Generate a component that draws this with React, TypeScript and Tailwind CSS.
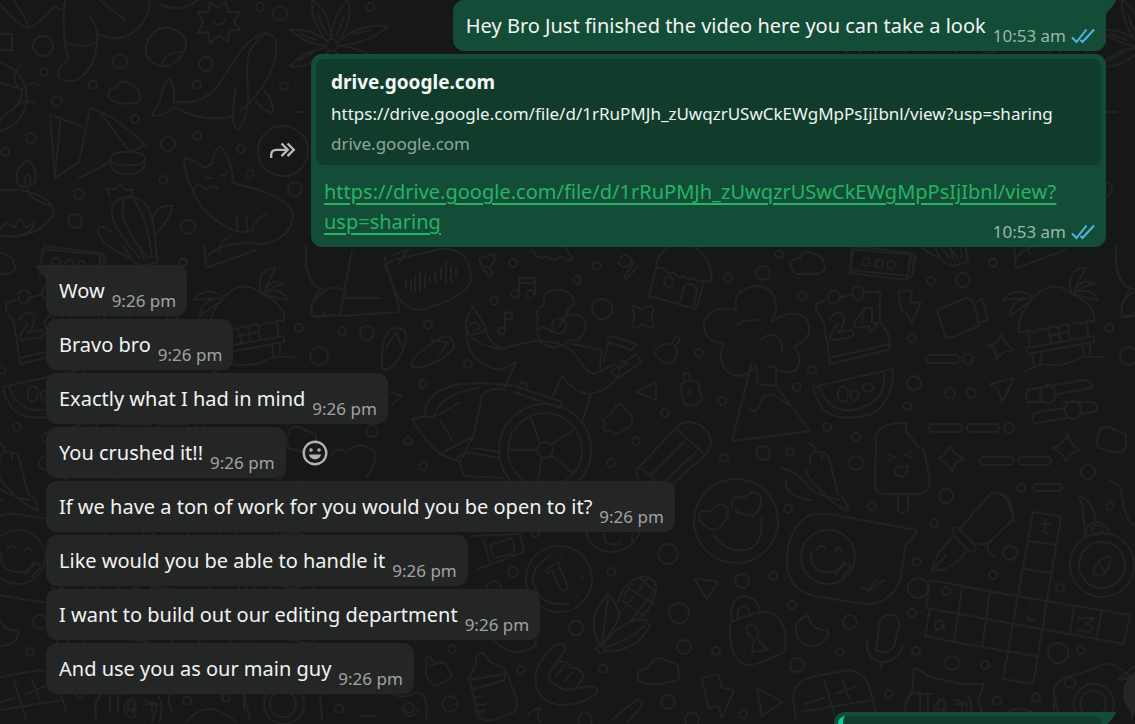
import type { ReactNode } from "react"

interface IncomingMessage {
  id: number
  text: string
  time: string
  reactable?: boolean
}

const FILE_URL = "https://drive.google.com/file/d/1rRuPMJh_zUwqzrUSwCkEWgMpPsIjIbnl/view?usp=sharing"

const incoming: IncomingMessage[] = [
  { id: 1, text: "Wow", time: "9:26 pm" },
  { id: 2, text: "Bravo bro", time: "9:26 pm" },
  { id: 3, text: "Exactly what I had in mind", time: "9:26 pm" },
  { id: 4, text: "You crushed it!!", time: "9:26 pm", reactable: true },
  { id: 5, text: "If we have a ton of work for you would you be open to it?", time: "9:26 pm" },
  { id: 6, text: "Like would you be able to handle it", time: "9:26 pm" },
  { id: 7, text: "I want to build out our editing department", time: "9:26 pm" },
  { id: 8, text: "And use you as our main guy", time: "9:26 pm" },
]

// cx, cy, r of the small rings scattered between the doodles
const rings = [
  [43, 46, 10], [120, 61, 7], [44, 72, 4], [93, 85, 4], [57, 101, 5], [31, 138, 5], [5, 152, 4],
  [206, 64, 7], [197, 85, 4], [284, 86, 4], [260, 7, 4], [280, 13, 7], [168, 144, 7], [197, 136, 4],
  [135, 119, 4], [163, 180, 4], [241, 149, 4], [250, 174, 4], [295, 189, 7], [79, 194, 5], [75, 221, 7],
  [188, 227, 7], [183, 262, 4], [299, 328, 4], [342, 331, 4], [367, 333, 7], [319, 356, 9], [370, 7, 4],
  [513, 263, 4], [577, 280, 4], [597, 266, 4], [494, 301, 4], [428, 325, 4], [468, 364, 4], [423, 384, 4],
  [602, 309, 10], [699, 353, 4], [728, 278, 4], [722, 401, 4], [665, 413, 4], [636, 441, 4], [611, 463, 4],
  [724, 458, 4], [408, 441, 4], [423, 466, 4], [779, 254, 4], [763, 273, 7], [802, 296, 4], [812, 370, 4],
  [797, 387, 4], [827, 427, 4], [856, 437, 4], [763, 453, 7], [790, 452, 4], [856, 463, 7], [912, 338, 4],
  [914, 383, 7], [907, 406, 4], [931, 281, 4], [963, 280, 7], [993, 263, 4], [950, 393, 5], [971, 393, 5],
  [968, 359, 5], [1009, 428, 5], [1088, 472, 7], [788, 509, 4], [872, 506, 4], [946, 496, 7], [934, 523, 4],
  [1021, 488, 4], [917, 562, 4], [918, 588, 10], [946, 591, 4], [1010, 553, 7], [993, 575, 4], [1060, 588, 4],
  [773, 576, 4], [792, 605, 4], [850, 622, 7], [912, 613, 4], [797, 665, 7], [840, 652, 4], [916, 651, 4],
  [952, 663, 7], [985, 665, 4], [1058, 653, 10], [1081, 650, 4], [889, 694, 4], [997, 701, 4], [1036, 697, 4],
  [1070, 683, 5], [1110, 506, 4], [668, 554, 10], [611, 572, 4], [742, 581, 7], [679, 613, 10], [684, 647, 7],
  [716, 651, 4], [603, 669, 4], [576, 628, 7], [513, 572, 5], [452, 649, 4], [521, 670, 4], [450, 704, 8],
  [409, 708, 5], [668, 702, 7], [743, 714, 4], [535, 533, 4], [494, 588, 7], [187, 701, 4], [226, 698, 4],
  [339, 709, 4], [372, 431, 6], [585, 720, 7], [692, 720, 7],
]

const doodles = [
  // globe and blanket, top left
  "M0 63A35 35 0 0 1 0 131M20 65Q8 80 22 90Q30 80 38 85M0 83L18 88Q28 92 14 108Q-2 120 0 122M14 108Q24 98 36 103M0 34H12M12 34V50H0",
  // sock
  "M65 0Q61 30 68 59Q56 70 58 76Q64 84 78 80Q98 66 97 34Q96 24 90 16M65 42Q82 50 97 42M97 34Q130 48 148 14L150 0M100 0L125 20M0 4Q20 28 30 28Q46 18 54 6L62 10M14 0Q24 16 30 28M160 4Q180 14 198 0",
  // folded note and burst
  "M146 46Q150 30 166 27Q182 30 186 42Q186 56 170 66Q152 68 146 54ZM162 66Q162 52 185 52",
  "M198 12L208 12L210 2L218 8L226 2L228 12L240 12L234 21L240 30L229 30L228 42L219 35L210 43L208 32L198 33L203 22ZM212 22Q220 28 226 20",
  // whale
  "M174 102Q176 86 169 78Q161 90 160 102Q152 112 153 116Q164 116 174 107Q206 124 234 116M177 102Q208 106 226 74Q246 38 264 33Q278 32 276 52Q272 84 240 111M236 88Q229 128 238 130Q246 122 248 100L247 66Q248 44 266 34M264 90Q276 106 272 113Q262 110 256 101M258 62H258",
  // cloud
  "M109 98Q106 88 116 88Q120 78 130 84Q138 86 138 92Q144 100 136 103Q118 106 109 98Z",
  // open book with a bun
  "M50 115L55 178L79 162L90 108Q114 114 145 145L130 152L100 112M52 115L83 127M79 178L110 162M60 122L55 178M110 160Q110 151 128 152Q146 152 145 160Q142 166 128 165Q112 166 110 160ZM111 164Q112 174 128 174Q144 174 145 162",
  // candle bowl
  "M18 184Q12 170 28 160Q40 172 34 184Q24 190 18 184ZM26 184Q22 178 28 174Q32 180 30 186M0 190H20Q52 196 54 212Q40 240 0 236M28 190Q30 200 52 206M0 230L6 222L14 228L20 218L26 228L34 222Q34 232 22 234",
  // cactus
  "M110 197L107 188L115 190L120 183L125 190L133 190L130 198M140 258Q108 224 112 206Q122 192 142 200Q156 212 156 258M124 200Q116 220 148 258M134 200Q148 220 152 258M112 232Q98 222 98 232Q100 244 130 258M152 220Q156 204 172 206Q172 216 156 234",
  // cat
  "M193 190Q184 174 184 158Q196 160 204 168L212 164Q214 150 220 146Q230 158 233 176Q230 184 238 184M193 190Q200 180 206 190Q214 182 218 190M193 190Q200 212 222 224Q240 236 250 230M236 184Q292 196 293 216Q290 240 262 244Q220 240 206 258M252 232Q254 220 266 214M236 216L238 230M246 218L248 232M206 178H212M220 174Q224 178 228 172M230 236Q216 244 220 254",
  // flower
  "M327 42Q310 20 312 0Q330 12 331 38Q334 12 348 0Q354 20 338 42Q356 24 388 26Q372 42 340 46Q362 48 376 60Q352 66 336 52M326 46Q306 44 290 30Q310 28 326 40M324 48Q302 52 290 66Q308 70 328 52M318 14Q322 28 328 36M344 16Q340 28 336 36M354 34L370 30M300 34L316 40M300 60L314 52",
  "M326 45A6 6 0 1 0 338 45A6 6 0 1 0 326 45",
  // ticket
  "M44 246L100 253L98 276L40 270ZM100 253L104 256L102 276M852 249L913 255M850 275L852 249M850 273L906 280L912 254M906 280L912 276L916 256M862 262A4 4 0 1 0 870 262A4 4 0 1 0 862 262M875 264A4 4 0 1 0 883 264A4 4 0 1 0 875 264M887 265A4 4 0 1 0 895 265A4 4 0 1 0 887 265",
  // voice note bubble
  "M384 265L394 260L440 249Q470 246 471 280Q466 298 420 310Q398 310 390 276ZM406 282V288M411 280V290M415 276V292M420 272V292M425 275V288M430 276V282M435 272V282M441 268V280M446 262V284M451 266V282M456 268V276M393 255L408 250L398 264",
  // helmeted skater
  "M305 262Q308 286 326 290Q336 284 346 292M352 250L340 315H328M384 255L400 312L340 316M324 292Q308 300 312 316H330M342 298H380",
  // notes, flags and small shapes
  "M480 262Q478 256 486 257Q494 250 495 260Q490 270 485 266M480 262L488 276Q494 276 490 268M620 258Q628 250 632 262Q622 272 619 262M634 262L624 278M638 266L626 280M519 295V278H535V294M519 283H535M511 294A4 4 0 1 0 519 294A4 4 0 1 0 511 294M526 294A4 4 0 1 0 534 294A4 4 0 1 0 526 294M505 330V312L512 313V319H506M498 331A3 3 0 1 0 505 331A3 3 0 1 0 498 331",
  "M632 307Q634 304 642 310Q652 302 654 310Q650 316 654 326Q650 330 642 324Q634 332 632 324Q636 316 632 307ZM532 250Q540 262 546 256Q556 264 560 256Q572 264 572 258L566 248",
  // toast and sandals
  "M382 368Q380 330 396 328Q408 328 406 340Q400 364 386 370ZM386 348L396 332L402 346M412 366Q408 358 440 338Q454 334 454 348Q442 362 420 368ZM430 340L448 342L440 354",
  // seated figure with flowers
  "M466 325Q468 344 500 349Q520 344 534 341Q566 340 578 358Q586 372 594 374L615 364Q624 370 614 382Q600 394 588 394Q574 392 562 376L553 396M466 325Q464 364 500 370L516 362L504 388M486 330Q490 346 506 349M466 322L472 306Q478 314 486 328Q480 336 466 334ZM470 326Q474 318 480 326Q480 330 474 330M572 344L602 350L600 368",
  "M538 318Q534 306 544 306Q542 290 556 290Q574 290 574 304Q566 310 566 316Q584 310 586 328Q582 342 570 340Q558 350 548 346Q534 344 538 318ZM566 314L560 326M552 326A7 8 0 1 0 566 326A7 8 0 1 0 552 326M538 330Q544 324 552 332M606 340L612 336L636 344L632 350L608 342L604 362M610 372L636 354L642 362L618 378ZM620 360L628 364L620 368",
  // market stall
  "M656 264Q664 244 680 242Q708 246 712 278Q710 284 704 280Q698 284 694 278Q688 282 684 276Q678 280 674 272Q668 276 664 268Q658 270 656 264M656 268L649 296L696 309L704 282M680 302L684 286Q692 280 697 290L694 306M664 282A5 5 0 1 0 674 282A5 5 0 1 0 664 282",
  // broccoli tree
  "M724 343Q702 342 704 322Q712 304 736 310Q732 288 758 286Q778 288 776 312Q770 322 772 322Q790 308 806 318Q816 338 794 346Q804 360 796 370Q784 376 774 366L768 368M738 325Q740 320 758 320M724 343Q716 360 728 372Q742 382 756 366M761 340Q774 328 782 344V350M756 366L758 384L776 386V370M752 362L732 441L810 431L776 386M748 408Q754 414 758 408L764 396L772 394L788 404",
  // bag tags and cursor
  "M656 350Q664 342 672 344Q674 336 678 336Q682 342 674 346L678 352Q674 364 666 364L655 356ZM680 386Q686 378 698 382L702 400Q694 408 684 404ZM684 380Q682 370 688 374L692 380M690 390L690 394M636 392L656 382V400Q646 396 636 392M390 392L402 396L392 404M602 420Q612 416 616 406L622 404L626 410Q636 416 630 426Q620 434 616 434L610 430Q602 434 604 426Q608 424 602 420",
  // pedal boat
  "M424 416Q426 390 460 384Q490 382 514 386L562 402L560 408L514 392M433 418Q440 394 478 388M412 419L427 416L433 418L460 402M412 419Q424 440 440 454L460 462L474 434L482 396Q490 386 506 390M440 420L452 440M440 454L470 438M472 448L500 452M456 460Q462 450 476 454L500 458M460 462L464 476L504 478M518 386Q524 378 528 388M590 396L582 424",
  "M499 450A46 46 0 1 0 591 450A46 46 0 1 0 499 450M508 450A37 37 0 1 0 582 450A37 37 0 1 0 508 450M537 450A8 8 0 1 0 553 450A8 8 0 1 0 537 450M540 444L531 418M552 444L576 428M552 456L572 472M542 458L537 484M537 450H508",
  // eraser pencil
  "M636 470L680 424Q694 418 706 430Q716 442 706 454L664 492Q650 492 640 486ZM676 428L706 456M684 442L650 476M696 452L662 484M640 468L652 476L660 488",
  // calendar
  "M825 300L816 304Q814 310 824 322L830 364L888 350Q894 338 880 322V292L866 292M838 298L850 295M828 297A6 7 0 1 0 840 297A6 7 0 1 0 828 297M852 293A6 7 0 1 0 864 293A6 7 0 1 0 852 293M829 358L890 344M829 320Q836 308 844 316Q846 324 838 332L852 330Q856 336 848 338L832 340Q826 338 838 324M866 308L872 308V322L878 324L874 330L870 332V326L856 328L854 322ZM864 316L862 322",
  // bolt, camera, sparkle
  "M898 292L912 290L910 302L921 303L912 322L906 312L902 312ZM937 310L966 298Q972 298 974 304L979 326L950 338Q944 338 944 332ZM977 302L982 298L988 320L984 322M988 320L980 322M990 345Q998 344 1002 334Q1004 344 1014 350Q1002 350 996 360Q998 350 988 345Z",
  // beach hut
  "M1018 330Q1020 308 1040 292Q1056 280 1072 294Q1096 304 1094 322L1088 320L1082 324L1076 322L1070 326L1064 324L1058 328L1052 326L1046 330L1040 328L1034 332L1028 330Q1018 334 1018 330M1032 296Q1014 286 1003 300Q1016 298 1030 298M1030 298Q1010 300 1010 316Q1020 308 1030 302M1071 292Q1066 268 1086 268Q1080 276 1074 292Q1082 276 1095 284Q1086 284 1074 293Q1090 286 1098 300Q1086 298 1074 294M1028 332L1030 346M1087 322L1088 336M1048 328L1052 344M1058 326L1060 342M1068 324L1070 340M1048 336L1068 332M1026 348L1094 336V342L1028 354ZM1032 354L1034 364M1042 352L1040 364M1082 346L1084 356M1090 344L1090 354M1024 372L1040 364Q1064 368 1080 358Q1088 356 1104 357",
  // ice-cream sticks, watermelon
  "M813 387L893 369Q894 400 872 414Q836 424 822 408Q814 396 813 387ZM819 386Q828 412 852 410Q888 404 884 372M838 396A4 6 0 1 0 848 392A4 6 0 1 0 838 396M851 392Q850 402 856 400Q862 394 856 390ZM862 386Q870 380 874 388Q870 394 864 390Z",
  "M930 355H956A4 4 0 0 1 956 363H930A4 4 0 0 1 930 355M933 424H958A4 4 0 0 1 958 432H933A4 4 0 0 1 933 424M971 424H995A4 4 0 0 1 995 432H971A4 4 0 0 1 971 424M984 457H1010A4 4 0 0 1 1010 465H984A4 4 0 0 1 984 457M1022 457H1047A4 4 0 0 1 1047 465H1022A4 4 0 0 1 1022 457M1035 484H1060A4 4 0 0 1 1060 491H1035A4 4 0 0 1 1035 484",
  "M990 384L1014 378L1002 402L998 390ZM938 458Q946 456 950 446Q954 454 964 459Q954 462 952 472Q948 462 938 458ZM1053 448Q1062 446 1068 434Q1070 446 1080 450Q1070 452 1066 461Q1062 452 1053 448Z",
  "M1027 390L1084 380Q1092 380 1092 388L1058 394M1042 402L1028 402Q1024 396 1028 390L1040 388M1040 394A8 9 0 1 0 1056 394A8 9 0 1 0 1040 394M1064 402L1090 402Q1100 402 1096 411L1082 414M1064 408L1034 413Q1030 422 1036 423L1066 418M1065 410A8 9 0 1 0 1081 410A8 9 0 1 0 1065 410M1097 440L1100 430Q1106 424 1114 430L1126 434V446Q1124 454 1114 452L1098 448Z",
  // popsicle
  "M875 486L876 436Q880 422 908 423Q902 430 912 438Q916 448 924 450L930 480Q930 492 920 494L884 494Q874 492 875 486M889 454L895 457L889 460M911 452L905 455L911 458M894 468L908 466Q906 480 900 476Q894 476 894 468M898 496V510Q902 516 908 510V494",
  // birds at left edge
  "M808 443Q814 444 816 452M810 462Q808 454 816 452Q828 450 830 462L838 494Q848 500 848 511Q832 504 820 490Q810 482 806 470M780 468Q796 470 808 486Q816 496 840 500M786 480Q784 496 812 500M822 454V460",
  // heart eyes
  "M694 521A42 42 0 1 0 778 521A42 42 0 1 0 694 521M700 520Q696 508 710 512Q720 500 728 508Q730 520 716 530Q704 528 700 520ZM732 508Q730 494 744 498Q754 488 760 496Q764 508 752 516Q738 514 732 508M714 536Q730 556 752 548Q764 538 761 518",
  "M586 532Q592 552 612 552Q632 550 640 532M604 534Q604 544 612 544Q620 546 620 540M632 534V542",
  // coin
  "M526 579A33 33 0 1 0 592 579A33 33 0 1 0 526 579M550 556Q532 566 533 582Q538 606 568 604M546 570Q552 566 558 562L568 588Q564 594 560 588L552 570L548 573Z",
  "M562 554V556M576 560V562M582 577V579M578 594V596",
  // gift
  "M470 536L520 534L524 552L476 570M484 540L490 564M490 545L512 538Q516 548 512 554L494 558ZM484 616Q492 650 516 652Q538 650 536 640",
  // corn
  "M600 646Q584 620 608 594Q622 610 618 620L602 646Q606 612 608 598M602 646Q622 618 646 620L650 626Q636 652 604 652M604 648Q630 640 644 626M618 602Q624 580 644 576Q658 580 656 592Q650 612 638 620M628 588L654 604M622 600L644 616M640 578L656 592M618 616L648 578M632 620L656 588M624 596L632 584M596 648L602 644L606 650L600 654Z",
  // cursor, padlock
  "M694 578L718 582L707 599L702 592ZM732 622Q728 598 744 596Q758 598 760 612M738 620Q736 606 744 606Q750 608 750 616M732 622Q752 612 768 612Q784 616 786 640L784 652Q752 668 744 664Q728 656 730 624M748 634Q742 622 754 626Q762 632 756 638L768 650L752 652L754 640Z",
  // bottle, shaka hand, cloud
  "M468 680L476 664Q476 650 484 654Q488 660 490 662L504 668L506 674ZM470 680L472 690L504 680L506 672M472 690L478 716Q484 722 494 720L514 712Q520 704 514 692L508 676M474 698L482 696M476 706L486 704M478 712L486 710M426 664Q424 656 430 657L436 664L444 662L452 676L444 682L434 686L426 676ZM430 666L440 662",
  "M536 684Q532 668 552 648Q562 640 566 648L556 664Q546 672 550 680Q558 688 566 690L590 686Q600 686 596 694Q580 706 558 705Q538 700 536 684M560 662Q566 660 572 668Q582 668 584 678M556 676L564 666M564 682L572 672M574 690L582 680M528 716Q530 710 540 708Q536 718 540 722M612 720L636 700Q646 698 640 708L628 722",
  "M638 680Q636 668 648 668Q656 652 668 662Q680 662 678 670Q684 682 668 682Q650 688 638 680ZM702 678L718 674L722 688L734 690L722 718L718 706L708 708ZM757 688L782 702L762 716Z",
  "M790 262Q796 258 800 258Q804 248 814 254Q824 256 824 264Q828 270 818 274L796 274Q790 270 790 262M934 246Q944 266 952 266L968 262L966 246M950 248L954 260M1014 246L1016 268L1066 250M1116 246Q1114 280 1130 290Q1120 302 1122 316Q1130 320 1134 312",
  // smiling chat bubble
  "M787 564Q786 530 808 516Q820 512 840 516L916 530Q918 534 906 544L900 580Q892 604 864 604L814 596Q788 590 787 564M801 557A27 27 0 1 0 855 557A27 27 0 1 0 801 557M811 554Q810 572 828 572Q838 574 844 562M817 550Q820 542 825 548M834 552Q840 544 842 552M836 574L844 564Q850 562 850 568L842 577M862 588L868 590L876 580M868 592L872 588L884 580",
  // fountain pen
  "M959 530L990 494Q1000 490 1010 500Q1014 520 1012 520L988 544L978 544M953 528Q956 526 960 530L976 546Q976 552 970 552L954 536ZM952 538Q936 552 932 570Q950 572 966 552M934 568L946 556M1000 494Q1010 498 1014 522M988 544Q986 554 994 556",
  // crossword
  "M1033 512L1061 516L1033 684L1003 679ZM1029 541L1056 545M1024 569L1052 573M962 587L1130 615L1124 644L926 608L930 580L1046 601M962 587L954 642L1034 656M990 592L982 646M1074 606L1070 634M1102 610L1096 639M1006 651L1036 656M930 608L925 636L954 642M1046 520L1044 532L1048 534M1040 524H1050M936 630Q932 620 942 620Q944 630 936 630M942 620L944 630M1078 618L1094 618L1086 624Q1096 626 1090 632L1078 630M1030 604V606M1028 616Q1026 622 1034 620",
  // compass
  "M1070 565A32 32 0 1 0 1134 565A32 32 0 1 0 1070 565M1079 565A23 23 0 1 0 1125 565A23 23 0 1 0 1079 565M1086 538L1082 504Q1076 494 1084 498Q1094 506 1096 520M1084 536Q1088 520 1100 522Q1110 528 1108 534M1092 530A5 5 0 1 0 1102 530A5 5 0 1 0 1092 530M1093 574Q1094 560 1110 556Q1112 566 1102 576ZM1100 564L1104 570M1110 480L1120 486L1124 508Q1128 522 1135 526",
  // moon, mic
  "M808 615Q790 622 798 638Q806 650 820 644Q830 638 828 630Q812 632 808 615ZM876 650L880 620Q886 612 896 616Q902 624 898 630L894 646Q888 656 876 650ZM867 641Q866 660 882 662Q900 660 902 646M882 662L880 670",
  // calculator and cat mug
  "M796 720L793 698Q794 680 816 676L850 670Q866 674 870 690L876 712M824 680L836 720M800 712L872 700M805 704L824 698M836 694L856 686M842 680L850 700M906 720L905 706L912 692L914 668Q924 672 928 676Q948 682 964 684L984 684L978 700L982 712M916 694L932 694M920 694V710M928 696V712M938 700Q946 696 944 704Q950 712 938 710ZM956 704H966M962 704V714",
  // camera
  "M1054 710L1054 688Q1060 676 1080 674L1096 668Q1106 660 1116 666L1130 676Q1126 680 1118 680L1135 666M1074 704A19 19 0 1 0 1114 704A19 19 0 1 0 1074 704M1080 704A13 13 0 1 0 1106 704A13 13 0 1 0 1080 704M96 712Q92 694 110 692M160 720Q164 704 158 696M124 706Q130 698 136 704Q130 710 136 716Q126 722 124 706M144 700L158 704L152 722M186 722Q208 696 236 722M244 694L250 720M320 694L322 720M360 716L376 716M392 694Q406 700 416 692Q430 694 426 720M402 708A8 8 0 1 0 418 708",
  "M290 430Q296 422 310 432M332 456Q334 446 346 452Q360 440 372 450Q382 456 366 478M1104 112H1116",
]

function Wallpaper() {
  return (
    <svg
      aria-hidden="true"
      className="pointer-events-none absolute inset-0 size-full"
      viewBox="0 0 1135 724"
      preserveAspectRatio="xMinYMin slice"
      fill="none"
      stroke="#212323"
      strokeWidth="2"
      strokeLinecap="round"
      strokeLinejoin="round"
    >
      <defs>
        <g id="doodles">
          {doodles.map((d, i) => (
            <path key={i} d={d} />
          ))}
          {rings.map(([cx, cy, r], i) => (
            <circle key={i} cx={cx} cy={cy} r={r} />
          ))}
        </g>
      </defs>
      {/* the wallpaper tile is 810 wide */}
      <use href="#doodles" x="-810" />
      <use href="#doodles" />
      <use href="#doodles" x="810" />
    </svg>
  )
}

function Tail({ side }: { side: "left" | "right" }) {
  return side === "right" ? (
    <svg aria-hidden="true" className="absolute top-0 -right-[10px] h-4 w-5 fill-[#144d37]" viewBox="0 0 20 16">
      <path d="M0 0H18Q21 0 19 3L10 14V16H0Z" />
    </svg>
  ) : (
    <svg aria-hidden="true" className="absolute top-0 -left-[10px] h-4 w-5 fill-[#242626]" viewBox="0 0 20 16">
      <path d="M20 0H2Q-1 0 1 3L10 14V16H20Z" />
    </svg>
  )
}

function ReadTicks() {
  return (
    <svg
      role="img"
      aria-label="Read"
      className="h-4 w-6"
      viewBox="0 0 24 16"
      fill="none"
      stroke="#53b4e4"
      strokeWidth="2"
    >
      <path d="M1 9.5L5.5 14L15.5 1.5M9.5 12L11.5 14L23 1.5" />
    </svg>
  )
}

function SentTime({ children }: { children: ReactNode }) {
  return (
    <span className="flex shrink-0 items-center gap-[5px] pb-[5px] text-[17px] leading-5 whitespace-nowrap text-[#9bb6aa]">
      {children}
      <ReadTicks />
    </span>
  )
}

function LinkMessage() {
  return (
    <div className="mt-[3px] flex items-center justify-end gap-[2px]">
      <button
        aria-label="Forward"
        className="flex size-[52px] shrink-0 items-center justify-center rounded-full border-2 border-[#222424] bg-[#161717]"
      >
        <svg className="h-5 w-7" viewBox="0 0 28 20" fill="none" stroke="#b9baba" strokeWidth="2.3">
          <path d="M2.2 17V14Q2.2 8.8 7.5 8.8H18M12.5 2.5L18.8 8.8L12.5 15.1M18.5 2.5L24.8 8.8L18.5 15.1" />
        </svg>
      </button>
      <div className="relative w-3/4 shrink-0 rounded-[11px] bg-[#144d37] p-[5px]">
        <div className="rounded-lg bg-[#113c2c] px-[15px] py-[7px]">
          <p className="text-[19px] leading-8 font-bold text-[#f3f7f5]">drive.google.com</p>
          <p className="truncate text-[17px] leading-8 text-[#eef4f1]">{FILE_URL}</p>
          <p className="text-[17px] leading-7 text-[#8ea69c]">drive.google.com</p>
        </div>
        <p className="px-2 pt-3 pb-[5px] text-xl leading-[30px]">
          <a
            href={FILE_URL}
            className="text-[#25b463] underline decoration-2 underline-offset-4"
          >
            {FILE_URL}
          </a>
        </p>
        <div className="absolute right-[11px] bottom-0">
          <SentTime>10:53 am</SentTime>
        </div>
      </div>
    </div>
  )
}

function IncomingBubble({ message, first }: { message: IncomingMessage; first: boolean }) {
  return (
    <li className="flex items-center gap-4">
      <div
        className={
          first
            ? "relative flex items-end gap-[7px] rounded-[11px] rounded-tl-none bg-[#242626] pr-[11px] pl-[13px]"
            : "relative flex items-end gap-[7px] rounded-[11px] bg-[#242626] pr-[11px] pl-[13px]"
        }
      >
        {first && <Tail side="left" />}
        <p className="relative pt-[11px] pb-[10px] text-xl leading-[30px] text-[#f1f2f2]">{message.text}</p>
        <span className="shrink-0 pb-[5px] text-[17px] leading-5 whitespace-nowrap text-[#a1a2a2]">{message.time}</span>
      </div>
      {message.reactable && (
        <button aria-label="React">
          <svg className="size-[26px]" viewBox="0 0 26 26" fill="none">
            <circle cx="13" cy="13" r="11.3" stroke="#b0b1b1" strokeWidth="2.4" />
            <circle cx="9" cy="10" r="1.8" fill="#b0b1b1" />
            <circle cx="17" cy="10" r="1.8" fill="#b0b1b1" />
            <path d="M6.8 14.6H19.2Q17.6 19.4 13 19.4Q8.4 19.4 6.8 14.6Z" fill="#b0b1b1" />
          </svg>
        </button>
      )}
    </li>
  )
}

export default function App() {
  return (
    <main className="relative h-screen overflow-hidden bg-[#161717] font-['Noto_Sans','Open_Sans',sans-serif]">
      <Wallpaper />
      <div className="relative pr-[29px] pl-[46px]">
        <div className="flex justify-end">
          <div className="relative flex items-end gap-[7px] rounded-[11px] rounded-tr-none bg-[#144d37] pr-[11px] pl-[13px]">
            <Tail side="right" />
            <p className="relative pt-[11px] pb-[10px] text-xl leading-[30px] text-[#f1f5f3]">
              Hey Bro Just finished the video here you can take a look
            </p>
            <SentTime>10:53 am</SentTime>
          </div>
        </div>

        <LinkMessage />

        <ul className="mt-[18px] flex flex-col gap-[3px]">
          {incoming.map((message, i) => (
            <IncomingBubble key={message.id} message={message} first={i === 0} />
          ))}
        </ul>

        <div className="mt-[18px] flex justify-end">
          <div className="relative w-[272px] rounded-[11px] rounded-tr-none bg-[#144d37] p-1">
            <Tail side="right" />
            <div className="relative h-16 overflow-hidden rounded-lg border-l-[5px] border-[#06cf9c] bg-[#113c2c]" />
          </div>
        </div>
      </div>
      <button
        aria-label="Scroll to bottom"
        className="absolute -right-[40px] bottom-1 size-[52px] rounded-full bg-[#242626]"
      />
    </main>
  )
}
